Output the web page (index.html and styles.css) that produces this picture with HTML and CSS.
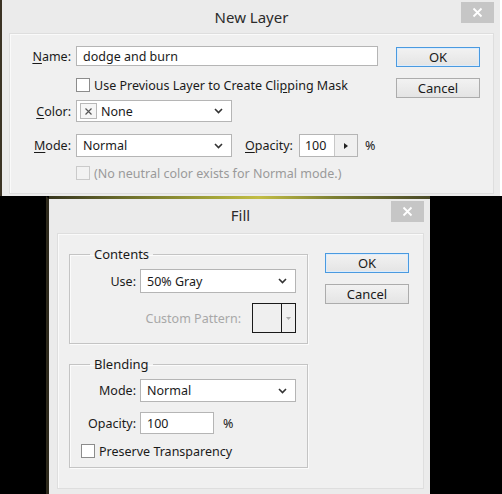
FILE: index.html
```html
<!DOCTYPE html>
<html>
<head>
<meta charset="utf-8">
<link rel="stylesheet" href="styles.css">
</head>
<body>
<div class="screen">
  <div class="top-wrap">
    <div class="win win-top">
      <div class="titlebar tb-top">
        <span></span>
        <div class="title">New Layer</div>
        <div class="close"><svg width="11" height="11" viewBox="0 0 11 11"><path d="M1.5 1.5 L9.5 9.5 M9.5 1.5 L1.5 9.5" stroke="#fff" stroke-width="1.8"/></svg></div>
      </div>
      <div class="panel panel-top">
        <div class="form">
          <div class="row r-name">
            <label class="lbl"><u>N</u>ame:</label>
            <div class="input name-input">dodge and burn</div>
          </div>
          <div class="row r-clip">
            <span class="lbl"></span>
            <span class="check"></span>
            <span class="ctext">Use Previous Layer to Create Cli<u>p</u>ping Mask</span>
          </div>
          <div class="row r-color">
            <label class="lbl"><u>C</u>olor:</label>
            <div class="select sel-color">
              <span class="swatch"><svg width="9" height="9" viewBox="0 0 9 9"><path d="M1.5 1.5 L7.5 7.5 M7.5 1.5 L1.5 7.5" stroke="#555" stroke-width="1.2"/></svg></span>
              <span class="stext">None</span>
              <svg class="chev" width="9" height="6" viewBox="0 0 9 6"><path d="M1 1 L4.5 4.5 L8 1" fill="none" stroke="#333" stroke-width="1.6"/></svg>
            </div>
          </div>
          <div class="row r-mode">
            <label class="lbl"><u>M</u>ode:</label>
            <div class="select sel-mode">
              <span class="stext">Normal</span>
              <svg class="chev" width="9" height="6" viewBox="0 0 9 6"><path d="M1 1 L4.5 4.5 L8 1" fill="none" stroke="#333" stroke-width="1.6"/></svg>
            </div>
            <label class="op-lbl"><u>O</u>pacity:</label>
            <div class="spin">
              <span class="spin-val">100</span>
              <span class="spin-btn"><svg width="4" height="6" viewBox="0 0 4 6"><path d="M0 0 L4 3 L0 6 Z" fill="#222"/></svg></span>
            </div>
            <span class="pct">%</span>
          </div>
          <div class="row r-neutral">
            <span class="lbl"></span>
            <span class="check disabled"></span>
            <span class="ctext dis">(No neutral color exists for Normal mode.)</span>
          </div>
        </div>
        <div class="buttons top-buttons">
          <div class="btn ok">OK</div>
          <div class="btn">Cancel</div>
        </div>
      </div>
    </div>
  </div>
  <div class="fill-row">
    <div class="win win-fill">
      <div class="titlebar tb-fill">
        <span></span>
        <div class="title">Fill</div>
        <div class="close"><svg width="11" height="11" viewBox="0 0 11 11"><path d="M1.5 1.5 L9.5 9.5 M9.5 1.5 L1.5 9.5" stroke="#fff" stroke-width="1.8"/></svg></div>
      </div>
      <div class="panel panel-fill">
        <div class="groups">
          <fieldset class="group g-contents">
            <legend>Contents</legend>
            <div class="grow g-use">
              <label class="glbl">Use:</label>
              <div class="select sel-use">
                <span class="stext">50% Gray</span>
                <svg class="chev" width="9" height="6" viewBox="0 0 9 6"><path d="M1 1 L4.5 4.5 L8 1" fill="none" stroke="#333" stroke-width="1.6"/></svg>
              </div>
            </div>
            <div class="grow g-pattern">
              <span class="pat-lbl">Custom Pattern:</span>
              <div class="pattern">
                <span class="pat-swatch"></span>
                <span class="pat-btn"><svg width="5" height="3" viewBox="0 0 5 3"><path d="M0 0 L5 0 L2.5 3 Z" fill="#aaa"/></svg></span>
              </div>
            </div>
          </fieldset>
          <fieldset class="group g-blending">
            <legend>Blending</legend>
            <div class="grow g-mode">
              <label class="glbl">Mode:</label>
              <div class="select sel-use">
                <span class="stext">Normal</span>
                <svg class="chev" width="9" height="6" viewBox="0 0 9 6"><path d="M1 1 L4.5 4.5 L8 1" fill="none" stroke="#333" stroke-width="1.6"/></svg>
              </div>
            </div>
            <div class="grow g-opacity">
              <label class="glbl">Opacity:</label>
              <div class="input op-input">100</div>
              <span class="pct2">%</span>
            </div>
            <div class="grow g-preserve">
              <span class="check"></span>
              <span class="ctext">Preserve Transparency</span>
            </div>
          </fieldset>
        </div>
        <div class="buttons fill-buttons">
          <div class="btn ok">OK</div>
          <div class="btn">Cancel</div>
        </div>
      </div>
    </div>
  </div>
</div>
</body>
</html>
```

FILE: styles.css
```css
* { box-sizing: border-box; }
html, body { margin: 0; padding: 0; }
body {
  background: #000;
  font-family: "Noto Sans", "Open Sans", sans-serif;
  font-size: 12.5px;
  color: #1a1a1a;
  width: 502px;
  height: 494px;
  overflow: hidden;
}
u { text-decoration: underline; text-underline-offset: 2px; }

.top-wrap {
  background: #fff;
  width: 502px;
  height: 196px;
}
.win {
  background: #ebebeb;
}
.win-top {
  width: 500px;
  height: 196px;
  border-left: 2px solid #3b3324;
  padding: 0 6px 0 7px;
}
.titlebar {
  display: grid;
  grid-template-columns: 1fr auto 1fr;
  align-items: start;
}
.tb-top { height: 33px; }
.title {
  font-family: "Noto Sans", sans-serif;
  font-size: 15px;
  color: #2b2b2b;
  line-height: 20px;
  padding-top: 7px;
}
.tb-fill .title { padding-top: 6px; }
.close {
  justify-self: end;
  width: 33px;
  height: 21px;
  margin-top: 2px;
  background: #c6c6c6;
  display: flex;
  align-items: center;
  justify-content: center;
}
.panel {
  background: #f0f0f0;
  border: 1px solid #dedede;
  box-shadow: inset 1px 1px 0 #fafafa;
  display: flex;
}
.panel-top {
  height: 161px;
  padding-top: 12px;
}
.form {
  display: flex;
  flex-direction: column;
}
.row {
  display: flex;
  align-items: center;
}
.lbl {
  width: 61px;
  margin-right: 5px;
  text-align: right;
  flex: none;
}
.r-name { height: 20px; }
.r-clip { height: 20px; margin-top: 9px; }
.r-color { height: 22px; margin-top: 5px; }
.r-mode { height: 23px; margin-top: 12px; }
.r-neutral { height: 18px; margin-top: 7px; }

.input {
  background: #fff;
  border: 1px solid #b5b5b5;
  display: flex;
  align-items: center;
  padding-left: 6px;
}
.name-input { width: 302px; height: 20px; }

.check {
  width: 14px;
  height: 14px;
  border: 1px solid #8c8c8c;
  background: #fff;
  flex: none;
  margin-right: 4px;
}
.check.disabled {
  border-color: #cacaca;
  background: #f2f2f2;
}
.ctext { white-space: nowrap; }
.dis { color: #9a9a9a; }

.select {
  background: #fff;
  border: 1px solid #b5b5b5;
  display: flex;
  align-items: center;
  position: relative;
  padding-left: 6px;
}
.select .chev { margin-left: auto; margin-right: 8px; }
.sel-color { width: 156px; height: 22px; padding-left: 3px; }
.sel-mode { width: 156px; height: 23px; }
.swatch {
  width: 17px;
  height: 16px;
  border: 1px solid #b8b8b8;
  background: #f6f6f6;
  display: flex;
  align-items: center;
  justify-content: center;
  margin-right: 4px;
}
.op-lbl { margin-left: 13px; margin-right: 6px; }
.spin {
  display: flex;
  height: 23px;
  width: 59px;
  border: 1px solid #b5b5b5;
}
.spin-val {
  width: 35px;
  background: #fff;
  border-right: 1px solid #c8c8c8;
  display: flex;
  align-items: center;
  padding-left: 5px;
}
.spin-btn {
  flex: 1;
  background: #f0f0f0;
  display: flex;
  align-items: center;
  justify-content: center;
}
.pct { margin-left: 7px; }

.buttons {
  display: flex;
  flex-direction: column;
}
.btn {
  width: 84px;
  height: 20px;
  border: 1px solid #acacac;
  background: linear-gradient(#f2f2f2, #e4e4e4);
  display: flex;
  align-items: center;
  justify-content: center;
  font-size: 13px;
}
.btn.ok {
  border-color: #4a9ae0;
  box-shadow: inset 0 0 0 1px #dcecfc;
}
.top-buttons {
  margin-left: 18px;
  padding-top: 1px;
  gap: 11px;
}

/* Fill dialog */
.fill-row {
  padding-left: 46px;
}
.win-fill {
  width: 384px;
  height: 298px;
  border-left: 3px solid #2e2a1c;
  border-top: 3px solid transparent;
  background-clip: padding-box;
  padding: 0 6px 0 8px;
  position: relative;
}
.win-fill::before {
  content: "";
  position: absolute;
  left: 0;
  right: 0;
  top: -3px;
  height: 3px;
  background: linear-gradient(90deg, #37361f 0%, #6c6e2c 20%, #a7a83a 45%, #c2bd45 55%, #7c7f33 75%, #4a4a28 100%);
}
.tb-fill { height: 34px; }
.panel-fill {
  height: 256px;
  padding: 12px 0 0 11px;
}
.groups {
  display: flex;
  flex-direction: column;
  gap: 12px;
}
.group {
  margin: 0;
  width: 239px;
  border: 1px solid #c4c4c4;
  box-shadow: inset 1px 1px 0 #fbfbfb, 1px 1px 0 #fbfbfb;
  padding: 7px 11px 0 0;
  min-width: 0;
}
.group legend {
  margin-left: 20px;
  padding: 0 4px;
  font-size: 13px;
  line-height: 16px;
}
.g-contents { height: 98px; padding-bottom: 10px; }
.g-blending { height: 112px; }
.grow {
  display: flex;
  align-items: center;
}
.glbl {
  width: 66px;
  text-align: right;
  margin-right: 4px;
  flex: none;
}
.sel-use { width: 156px; height: 24px; }
.g-mode .sel-use { height: 23px; }
.g-pattern {
  margin-top: 10px;
  height: 30px;
  justify-content: flex-end;
}
.pat-lbl { color: #a8a8a8; margin-right: 11px; }
.pattern {
  width: 44px;
  height: 30px;
  border: 1px solid #1a1a1a;
  display: flex;
}
.pat-swatch { width: 29px; border-right: 1px solid #1a1a1a; background: #efefef; }
.pat-btn { flex: 1; display: flex; align-items: center; justify-content: center; }
.g-opacity { margin-top: 10px; height: 22px; }
.op-input { width: 74px; height: 22px; }
.pct2 { margin-left: 9px; }
.g-preserve { margin-top: 10px; padding-left: 11px; height: 14px; }
.fill-buttons {
  margin-left: 17px;
  padding-top: 7px;
  gap: 11px;
}
```
